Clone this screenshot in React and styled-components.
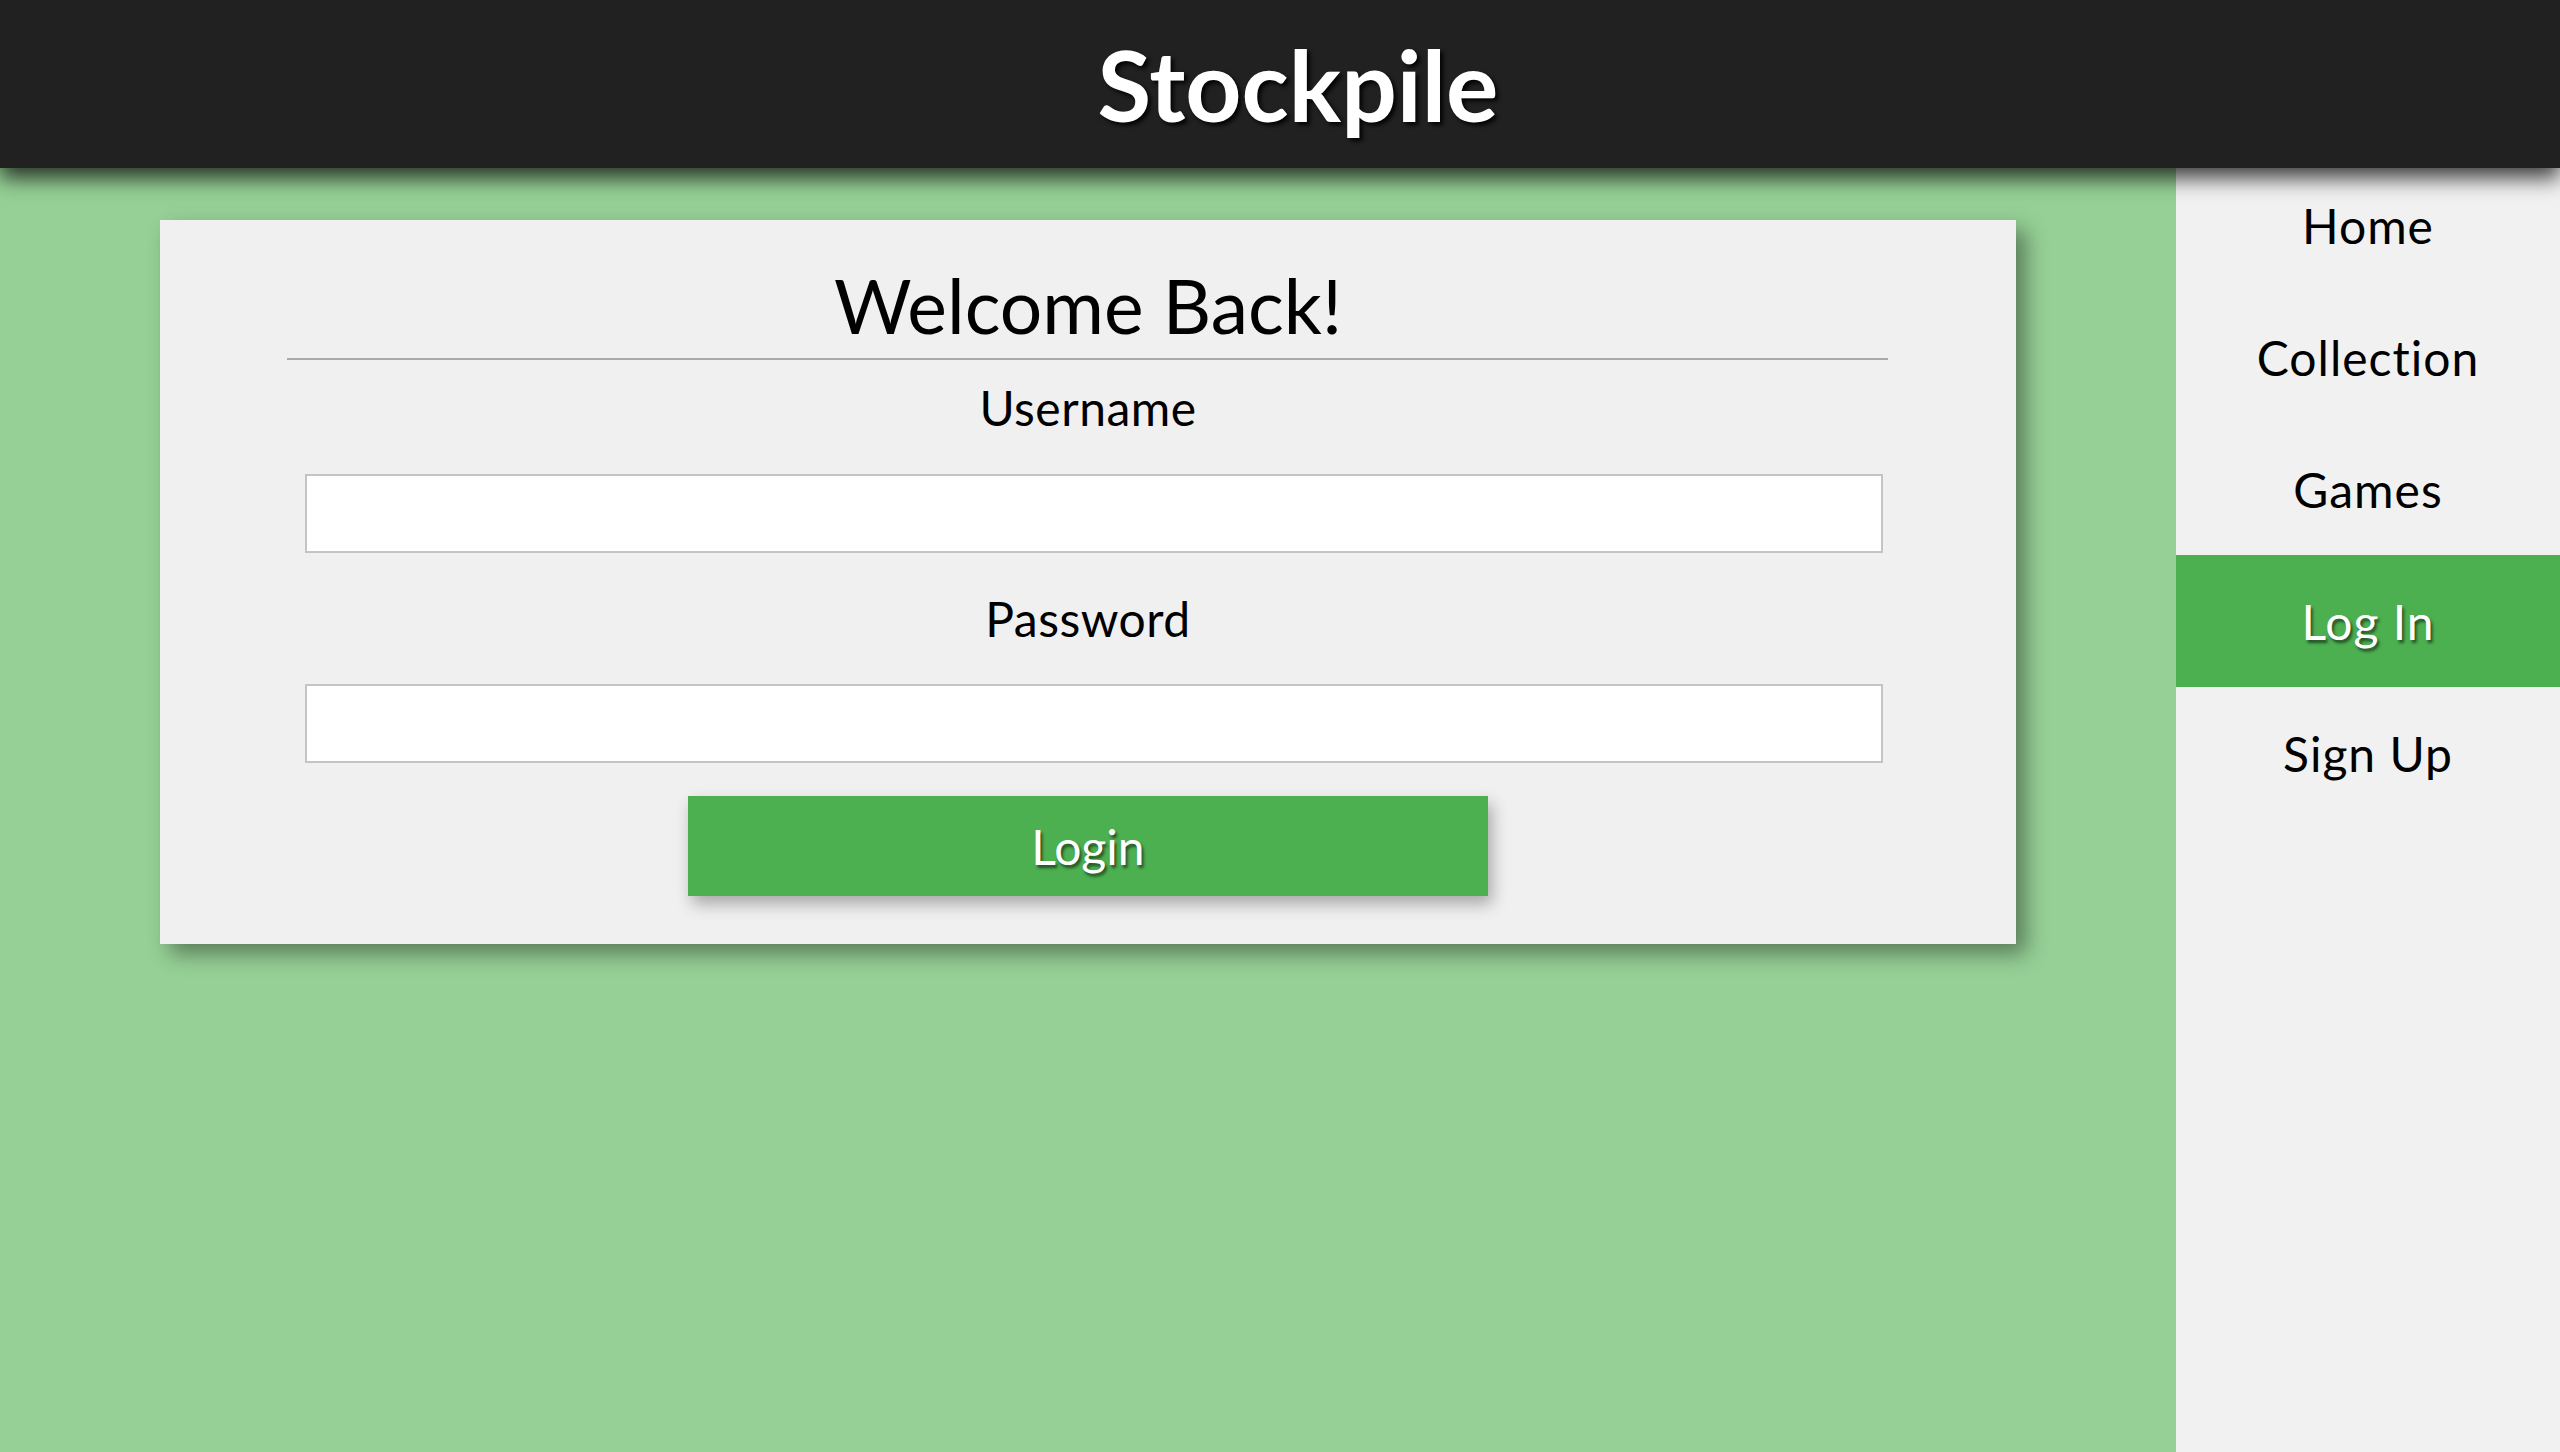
import styled, { createGlobalStyle } from 'styled-components';

const GlobalStyle = createGlobalStyle`
  html, body {
    margin: 0;
    padding: 0;
    overflow: hidden;
  }
  body {
    font-family: Lato, 'Open Sans', sans-serif;
    background-color: #96d096;
  }
`;

const Page = styled.div`
  display: flex;
  flex-direction: column;
  height: 100vh;
`;

const Header = styled.header`
  position: relative;
  z-index: 2;
  flex: none;
  height: 168px;
  background-color: #212121;
  box-shadow: 0 10px 20px rgba(0, 0, 0, 0.75);
  display: flex;
  align-items: center;
  justify-content: center;
  padding-left: 36px;
`;

const Brand = styled.h1`
  margin: 0;
  color: #ffffff;
  font-size: 98px;
  font-weight: 700;
  text-shadow: 3px 3px 4px rgba(0, 0, 0, 0.9);
`;

const Body = styled.div`
  flex: 1;
  display: flex;
  min-height: 0;
`;

const Main = styled.main`
  flex: 1;
  background-color: #96d096;
`;

const Sidebar = styled.nav`
  width: 384px;
  margin-top: -9px;
  background-color: #f1f1f1;
  display: flex;
  flex-direction: column;
`;

const NavItem = styled.a`
  height: 132px;
  flex: none;
  display: flex;
  align-items: center;
  justify-content: center;
  font-size: 48px;
  letter-spacing: 1px;
  text-decoration: none;
  color: ${(p) => (p.$active ? '#ffffff' : '#000000')};
  background-color: ${(p) => (p.$active ? '#4caf50' : 'transparent')};
  text-shadow: ${(p) =>
    p.$active ? '2px 3px 3px rgba(0, 0, 0, 0.55)' : 'none'};
`;

const Card = styled.section`
  margin: 52px 160px 0;
  background-color: #f0f0f0;
  box-shadow: 10px 10px 20px rgba(0, 0, 0, 0.4);
  padding: 40px 0 48px;
  display: flex;
  flex-direction: column;
`;

const Title = styled.h2`
  margin: 0;
  text-align: center;
  font-size: 75px;
  font-weight: 400;
  color: #000;
`;

const Divider = styled.hr`
  margin: 8px 128px 0 127px;
  border: none;
  height: 2px;
  background-color: #aaaaaa;
`;

const Label = styled.label`
  display: block;
  text-align: center;
  font-size: 48px;
  letter-spacing: 0.5px;
  color: #000;
  margin-top: ${(p) => p.$top}px;
`;

const Input = styled.input`
  box-sizing: border-box;
  display: block;
  height: 79px;
  margin: ${(p) => p.$top}px 133px 0 145px;
  border: 2px solid #c4c4c4;
  background-color: #ffffff;
  font-size: 32px;
  padding: 0 16px;
  &:focus {
    outline: none;
  }
`;

const LoginButton = styled.button`
  align-self: center;
  width: 800px;
  height: 100px;
  margin-top: 33px;
  border: none;
  background-color: #4caf50;
  color: #ffffff;
  font-family: Lato, 'Open Sans', sans-serif;
  font-size: 48px;
  text-shadow: 2px 3px 3px rgba(0, 0, 0, 0.55);
  box-shadow: 4px 8px 15px rgba(0, 0, 0, 0.3);
  cursor: pointer;
`;

const links = ['Home', 'Collection', 'Games', 'Log In', 'Sign Up'];

export default function App() {
  return (
    <Page>
      <GlobalStyle />
      <Header>
        <Brand>Stockpile</Brand>
      </Header>
      <Body>
        <Main>
          <Card>
            <Title>Welcome Back!</Title>
            <Divider />
            <Label htmlFor='username' $top={19}>
              Username
            </Label>
            <Input id='username' type='text' $top={38} />
            <Label htmlFor='password' $top={37}>
              Password
            </Label>
            <Input id='password' type='password' $top={37} />
            <LoginButton type='submit'>Login</LoginButton>
          </Card>
        </Main>
        <Sidebar>
          {links.map((link) => (
            <NavItem key={link} href='#' $active={link === 'Log In'}>
              {link}
            </NavItem>
          ))}
        </Sidebar>
      </Body>
    </Page>
  );
}
